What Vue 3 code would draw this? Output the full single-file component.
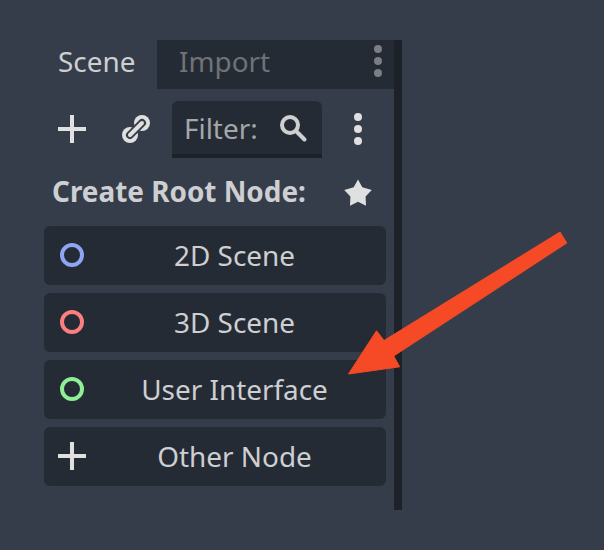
<script setup>
const nodes = [
  { label: '2D Scene', kind: 'blue' },
  { label: '3D Scene', kind: 'red' },
  { label: 'User Interface', kind: 'green' },
  { label: 'Other Node', kind: 'plus' },
]
</script>

<template>
  <main class="editor">
    <section class="dock">
      <div class="content">
        <nav class="tabs">
          <div class="tab active">Scene</div>
          <div class="tab-rest">
            <span class="tab">Import</span>
            <svg class="tab-menu" width="8" height="32" viewBox="0 0 8 32">
              <circle cx="4" cy="4" r="4" /><circle cx="4" cy="16" r="4" /><circle cx="4" cy="28" r="4" />
            </svg>
          </div>
        </nav>

        <div class="toolbar">
          <svg class="add" width="28" height="28" viewBox="0 0 28 28"><path d="M12 0h4v12h12v4H16v12h-4V16H0v-4h12z" /></svg>
          <svg class="link" width="28" height="28" viewBox="0 0 28 28">
            <circle cx="20" cy="8" r="8" /><circle cx="8" cy="20" r="8" />
            <path class="gap" d="M8 20l12-12" />
            <path class="bar" d="M8 20l12-12" />
          </svg>
          <div class="filter">
            <span>Filter:</span>
            <svg width="28" height="28" viewBox="0 0 28 28">
              <circle cx="10" cy="10" r="8" /><path d="M16 16l8.5 8.5" />
            </svg>
          </div>
          <svg class="menu" width="8" height="32" viewBox="0 0 8 32">
            <circle cx="4" cy="4" r="4" /><circle cx="4" cy="16" r="4" /><circle cx="4" cy="28" r="4" />
          </svg>
        </div>

        <div class="heading">
          <span>Create Root Node:</span>
          <svg width="28" height="28" viewBox="0 0 28 28">
            <path d="M14 .5l4.3 7.8 9.5 2.7-6.2 6.6.4 9.1-8-4-8 4 .4-9.1L.2 11l9.5-2.7z" />
          </svg>
        </div>

        <div class="nodes">
          <button v-for="node in nodes" :key="node.label" type="button" class="node">
            <svg width="28" height="28" viewBox="0 0 28 28" :class="node.kind">
              <path v-if="node.kind === 'plus'" d="M12 0h4v12h12v4H16v12h-4V16H0v-4h12z" />
              <circle v-else cx="14" cy="14" r="10" />
            </svg>
            <span>{{ node.label }}</span>
          </button>
        </div>
      </div>
      <div class="splitter"></div>
    </section>

    <svg class="arrow" width="220" height="144" viewBox="348 231 220 144">
      <path d="M348.5 374L376.5 330.8L384 340.5L560 232L566.8 243L393.7 356L399.7 366.8Z" />
    </svg>
  </main>
</template>

<style>
body { margin: 0; background: #363d4a; }
</style>

<style scoped>
.editor {
  position: relative;
  box-sizing: border-box;
  height: 550px;
  padding: 40px 0 0 36px;
  overflow: hidden;
  background: #363d4a;
  color: #cdcfd2;
  font: 27.9px/38px "Noto Sans", sans-serif;
  white-space: nowrap;
}
svg { display: block; flex: none; fill: #e0e0e0; }
.dock { display: flex; width: 366px; height: 470px; }
.content { width: 358px; }
.splitter { width: 8px; background: #1d2229; }
.tabs { display: flex; height: 49px; }
.tab { padding: 2px 0 0 22px; }
.active { width: 99px; }
.tab-rest {
  display: flex;
  flex: 1;
  justify-content: space-between;
  background: #252b34;
  color: #6f7378;
}
.tab-menu { margin: 5px 12px 0 0; fill: #7b7e82; }
.toolbar { display: flex; height: 57px; margin-top: 12px; align-items: flex-start; }
.add { margin: 14px 0 0 22px; }
.link { margin: 14px 0 0 36px; }
.link path { fill: none; stroke-linecap: round; }
.gap { stroke: #363d4a; stroke-width: 8; }
.bar { stroke: #e0e0e0; stroke-width: 4; }
.filter {
  box-sizing: border-box;
  display: flex;
  width: 150px;
  height: 57px;
  margin-left: 22px;
  padding: 8px 14px 0 12px;
  justify-content: space-between;
  border-bottom: 4px solid #1d2229;
  border-radius: 6px 6px 0 0;
  background: #252b34;
  color: #a4a7aa;
}
.filter svg { margin-top: 6px; fill: none; stroke: #cfcfd0; stroke-width: 4; stroke-linecap: round; }
.menu { margin: 12px 0 0 32px; }
.heading {
  display: flex;
  height: 68px;
  padding: 0 22px 0 16px;
  justify-content: space-between;
  font-weight: 700;
}
.heading span { padding-top: 14px; }
.heading svg { margin-top: 21px; }
.nodes { display: grid; gap: 8px; padding: 0 8px; }
.node {
  display: flex;
  height: 59px;
  margin: 0;
  padding: 0 14px 2px;
  align-items: center;
  border: 0;
  border-radius: 6px;
  background: #252b34;
  color: inherit;
  font: inherit;
}
.node span { flex: 1; padding-left: 11px; text-align: center; }
.blue, .red, .green { fill: none; stroke-width: 4; }
.blue { stroke: #8da5f3; }
.red { stroke: #fc7f7f; }
.green { stroke: #8eef97; }
.arrow { position: absolute; left: 348px; top: 231px; }
.arrow path { fill: #f54a25; stroke: #f54a25; stroke-linejoin: round; }
</style>
